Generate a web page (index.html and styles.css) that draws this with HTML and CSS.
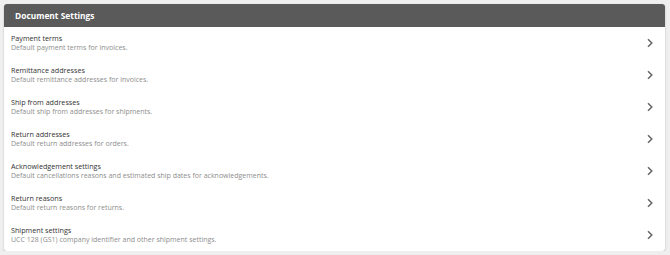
FILE: index.html
```html
<!DOCTYPE html>
<html>
<head>
<meta charset="utf-8">
<link rel="stylesheet" href="styles.css">
</head>
<body>
<div class="card">
  <div class="card-header">Document Settings</div>
  <ul class="list">
    <li class="row"><div class="text"><div class="title">Payment terms</div><div class="desc">Default payment terms for invoices.</div></div><svg class="chev" viewBox="0 0 8 10"><path d="M2 1.2 L5.8 5 L2 8.8" /></svg></li>
    <li class="row"><div class="text"><div class="title">Remittance addresses</div><div class="desc">Default remittance addresses for invoices.</div></div><svg class="chev" viewBox="0 0 8 10"><path d="M2 1.2 L5.8 5 L2 8.8" /></svg></li>
    <li class="row"><div class="text"><div class="title">Ship from addresses</div><div class="desc">Default ship from addresses for shipments.</div></div><svg class="chev" viewBox="0 0 8 10"><path d="M2 1.2 L5.8 5 L2 8.8" /></svg></li>
    <li class="row"><div class="text"><div class="title">Return addresses</div><div class="desc">Default return addresses for orders.</div></div><svg class="chev" viewBox="0 0 8 10"><path d="M2 1.2 L5.8 5 L2 8.8" /></svg></li>
    <li class="row"><div class="text"><div class="title">Acknowledgement settings</div><div class="desc">Default cancellations reasons and estimated ship dates for acknowledgements.</div></div><svg class="chev" viewBox="0 0 8 10"><path d="M2 1.2 L5.8 5 L2 8.8" /></svg></li>
    <li class="row"><div class="text"><div class="title">Return reasons</div><div class="desc">Default return reasons for returns.</div></div><svg class="chev" viewBox="0 0 8 10"><path d="M2 1.2 L5.8 5 L2 8.8" /></svg></li>
    <li class="row"><div class="text"><div class="title">Shipment settings</div><div class="desc">UCC 128 (GS1) company identifier and other shipment settings.</div></div><svg class="chev" viewBox="0 0 8 10"><path d="M2 1.2 L5.8 5 L2 8.8" /></svg></li>
  </ul>
</div>
</body>
</html>
```
FILE: styles.css
```css
html, body {
  margin: 0;
  padding: 0;
  background: #efefef;
}
body {
  padding: 4px 5px 0 4px;
  font-family: "Open Sans", "Liberation Sans", sans-serif;
}
.card {
  background: #ffffff;
  border-radius: 3px;
  box-shadow: 0 1px 2px rgba(0,0,0,0.25);
  overflow: hidden;
}
.card-header {
  background: #5a5a5a;
  color: #ffffff;
  font-weight: 700;
  font-size: 8.4px;
  height: 23px;
  line-height: 23px;
  padding-left: 11px;
}
.list {
  list-style: none;
  margin: 0;
  padding: 0;
}
.row {
  display: flex;
  align-items: center;
  justify-content: space-between;
  height: 32px;
  padding: 0 11px 0 7px;
}
.text {
  display: flex;
  flex-direction: column;
}
.title {
  font-size: 7.2px;
  line-height: 10px;
  color: #333333;
}
.desc {
  font-size: 7px;
  line-height: 10px;
  color: #8e8e8e;
}
.chev {
  width: 8px;
  height: 10px;
  fill: none;
  stroke: #666666;
  stroke-width: 1.5;
}
```
